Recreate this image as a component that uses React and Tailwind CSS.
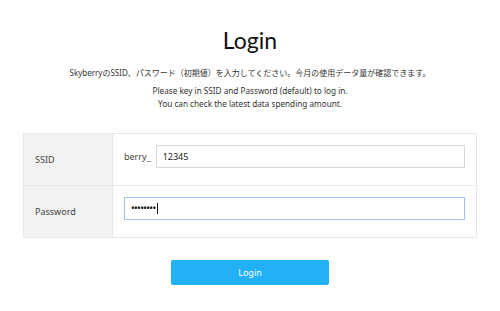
export default function App() {
  return (
    <div
      className="w-[500px] h-[311px] bg-white flex flex-col items-center text-[#333]"
      style={{ fontFamily: '"Noto Sans", "Noto Sans CJK JP", sans-serif' }}
    >
      <h1
        className="mt-[24px] text-[23px] leading-[32px] text-[#111]"
        style={{ fontFamily: 'Lato, "Noto Sans", sans-serif' }}
      >
        Login
      </h1>
      <p className="mt-[10px] text-[8px] leading-[13px]">
        SkyberryのSSID、パスワード（初期値）を入力してください。今月の使用データ量が確認できます。
      </p>
      <p className="mt-[5px] text-[8.2px] leading-[13px] text-center">
        Please key in SSID and Password (default) to log in.
        <br />
        You can check the latest data spending amount.
      </p>
      <div className="mt-[23px] w-[454px] border border-[#e8e8e8] flex flex-col">
        <div className="flex h-[52px] border-b border-[#e8e8e8]">
          <div className="w-[89px] bg-[#f2f2f2] border-r border-[#e8e8e8] pl-[11px] flex items-center text-[9px] text-[#444]">
            SSID
          </div>
          <div className="flex-1 flex items-start pt-[11px] pl-[11px] pr-[11px]">
            <span className="text-[9px] leading-[23px] text-[#444] mr-[5px]">berry_</span>
            <div className="flex-1 h-[23px] border border-[#d8d8d8] flex items-center pl-[6px] text-[9px] text-[#222]">
              12345
            </div>
          </div>
        </div>
        <div className="flex h-[51px]">
          <div className="w-[89px] bg-[#f2f2f2] border-r border-[#e8e8e8] pl-[11px] flex items-center text-[9px] text-[#444]">
            Password
          </div>
          <div className="flex-1 flex items-start pt-[11px] pl-[11px] pr-[11px]">
            <div className="flex-1 h-[23px] border border-[#9ec2f2] flex items-center pl-[6px] text-[10px] text-[#111] tracking-[-0.7px]">
              ••••••••
              <span className="ml-[2px] w-px h-[11px] bg-[#111]" />
            </div>
          </div>
        </div>
      </div>
      <button className="mt-[22px] w-[158px] h-[25px] rounded-[2px] bg-[#22b1f6] text-white text-[9px] flex items-center justify-center">
        Login
      </button>
    </div>
  );
}
